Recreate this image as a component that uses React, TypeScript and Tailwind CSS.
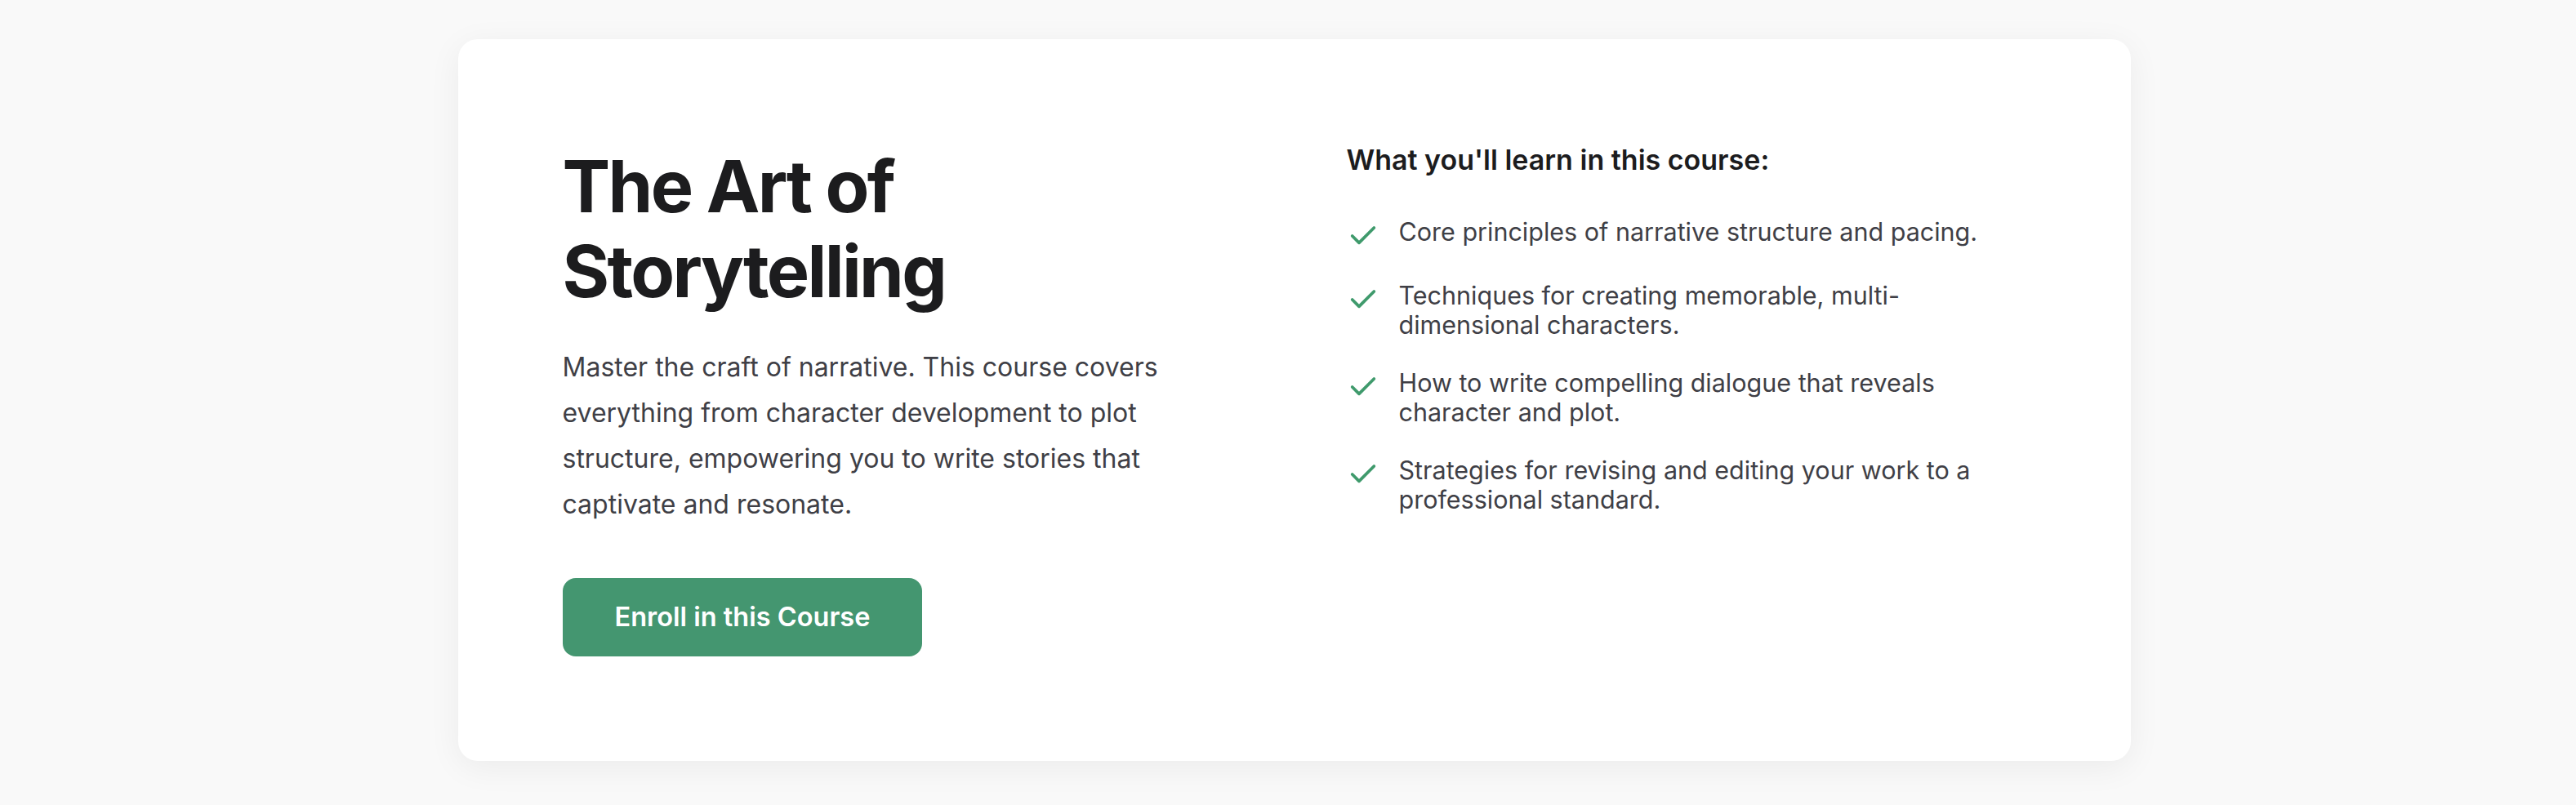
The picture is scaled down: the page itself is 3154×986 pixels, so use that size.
import { Check } from 'lucide-react'

const POINTS = [
  'Core principles of narrative structure and pacing.',
  'Techniques for creating memorable, multi-dimensional characters.',
  'How to write compelling dialogue that reveals character and plot.',
  'Strategies for revising and editing your work to a professional standard.',
]

export default function App() {
  return (
    <div className="min-h-screen bg-[#f9f9f9] pt-[48px] pl-[15px] font-['Inter','Noto_Sans',sans-serif] antialiased">
      <div className="mx-auto max-w-[2048px] rounded-[24px] bg-white p-[128px] shadow-[0_8px_40px_rgba(0,0,0,0.06)]">
        <div className="grid grid-cols-2 gap-[128px]">
          {/* left: intro */}
          <div>
            <h1 className="text-[88px] font-bold leading-[104px] tracking-[-0.03em] text-[#1c1c1e]">
              The Art of Storytelling
            </h1>
            <p className="mt-[38px] text-[32px] leading-[56px] text-[#3f3f46]">
              Master the craft of narrative. This course covers everything from character development to plot
              structure, empowering you to write stories that captivate and resonate.
            </p>
            <button className="mt-[62px] rounded-[16px] bg-[#449670] px-[64px] py-[24px] text-[32.5px] font-semibold leading-[48px] text-white">
              Enroll in this Course
            </button>
          </div>

          {/* right: outline */}
          <div>
            <h2 className="text-[34px] font-semibold leading-[40px] text-[#1c1c1e]">What you'll learn in this course:</h2>
            <ul className="mt-[50px] flex flex-col gap-[35px]">
              {POINTS.map((p) => (
                <li key={p} className="flex items-start gap-[24px]">
                  <Check className="mt-[3px] h-[40px] w-[40px] shrink-0 text-[#3f9a6c]" strokeWidth={2.25} />
                  <span className="text-[30.5px] leading-[36px] text-[#3f3f46]">{p}</span>
                </li>
              ))}
            </ul>
          </div>
        </div>
      </div>
    </div>
  )
}
